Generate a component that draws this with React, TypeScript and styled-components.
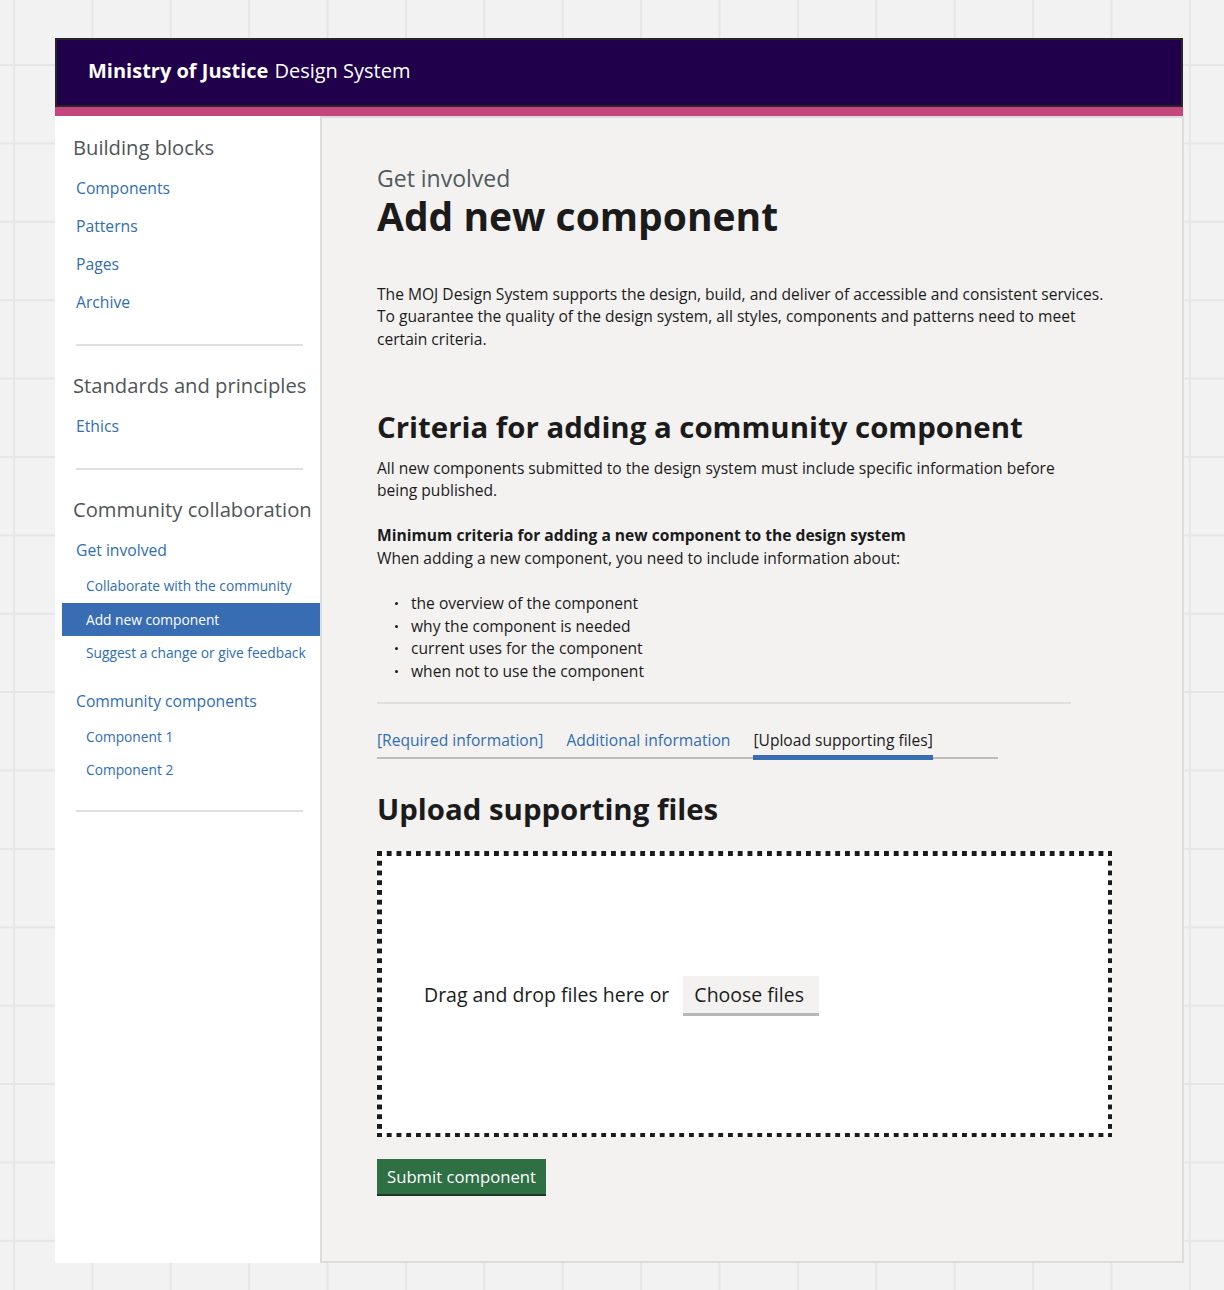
import React from "react";
import styled, { createGlobalStyle } from "styled-components";

const GlobalStyle = createGlobalStyle`
  html, body {
    margin: 0;
    padding: 0;
  }
  body {
    font-family: "Open Sans", "Noto Sans", Arial, sans-serif;
    background-color: #f2f2f2;
    background-image:
      linear-gradient(to right, #e6e6e6 2px, transparent 2px),
      linear-gradient(to bottom, #e6e6e6 2px, transparent 2px);
    background-size: 78.4px 78.4px;
    background-position: 13px 64px;
    min-height: 1290px;
  }
  * { box-sizing: border-box; }
`;

const Frame = styled.div`
  width: 1128px;
  margin: 38px 0 0 55px;
  padding-bottom: 27px;
`;

const Header = styled.header`
  height: 69px;
  background: #20004a;
  border: 2px solid #262626;
  display: flex;
  align-items: center;
  padding: 0 0 5px 31px;
  color: #ffffff;
  font-size: 20px;
`;

const Brand = styled.strong`
  font-weight: 700;
  margin-right: 6px;
`;

const Stripe = styled.div`
  height: 9px;
  background: #c4467c;
`;

const Body = styled.div`
  display: grid;
  grid-template-columns: 265px 1fr;
`;

const Sidebar = styled.nav`
  background: #ffffff;
  padding-top: 17px;
  display: flex;
  flex-direction: column;
`;

const SideHeading = styled.h2`
  margin: 0 0 8px 18px;
  font-size: 20.2px;
  line-height: 28px;
  font-weight: 400;
  color: #505558;
  white-space: nowrap;
`;

const SideList = styled.ul`
  list-style: none;
  margin: 0;
  padding: 0;
`;

const SideLink = styled.li<{ $gap?: number }>`
  height: 38px;
  line-height: 38px;
  padding-left: 21px;
  margin-top: ${(p) => p.$gap ?? 0}px;
  font-size: 15.7px;
  color: #2f6db5;
`;

const SubLink = styled.li<{ $active?: boolean }>`
  height: 33.5px;
  line-height: 33.5px;
  margin-left: 7px;
  padding-left: 24px;
  font-size: 13.75px;
  color: ${(p) => (p.$active ? "#ffffff" : "#2f6db5")};
  background: ${(p) => (p.$active ? "#386db4" : "transparent")};
  white-space: nowrap;
`;

const SideRule = styled.hr`
  border: 0;
  height: 2px;
  background: #e0e0e0;
  margin: 23px 17px 25px 21px;
`;

const Main = styled.main`
  background: #f3f2f1;
  border: 2px solid #dcdcdc;
  padding: 48px 70px 67px 55px;
  color: #0b0c0c;
`;

const Caption = styled.span`
  display: block;
  font-size: 23px;
  line-height: 24px;
  color: #505a5f;
`;

const Title = styled.h1`
  margin: 0;
  font-size: 39px;
  line-height: 52px;
  font-weight: 700;
  color: #1b1b1b;
`;

const Lead = styled.p<{ $top: number; $width?: number }>`
  margin: ${(p) => p.$top}px 0 0;
  font-size: 15.6px;
  line-height: 22.3px;
  color: #1b1b1b;
  max-width: ${(p) => p.$width ?? 740}px;
`;

const SectionTitle = styled.h2<{ $top: number }>`
  margin: ${(p) => p.$top}px 0 0;
  font-size: 29.4px;
  line-height: 40px;
  font-weight: 700;
  color: #1b1b1b;
`;

const Bold = styled.strong`
  font-weight: 700;
`;

const Bullets = styled.ul`
  list-style: none;
  margin: 23px 0 0;
  padding: 0 0 0 34px;
  font-size: 15.6px;
  line-height: 22.5px;
  color: #1b1b1b;
`;

const Bullet = styled.li`
  position: relative;
  &::before {
    content: "";
    position: absolute;
    left: -16px;
    top: 10px;
    width: 3px;
    height: 3px;
    border-radius: 50%;
    background: #1b1b1b;
  }
`;

const Rule = styled.hr`
  border: 0;
  height: 2px;
  background: #dedede;
  width: 694px;
  margin: 20px 0 25px;
`;

const TabList = styled.div`
  display: flex;
  gap: 23px;
  width: 621px;
  border-bottom: 2px solid #bcbcbc;
`;

const Tab = styled.span<{ $active?: boolean }>`
  font-size: 15.6px;
  line-height: 22px;
  padding-bottom: 4px;
  margin-bottom: -3px;
  border-bottom: 5px solid ${(p) => (p.$active ? "#386db4" : "transparent")};
  color: ${(p) => (p.$active ? "#1b1b1b" : "#2f6db5")};
  white-space: nowrap;
`;

const DropZone = styled.div`
  margin-top: 22px;
  width: 735px;
  height: 286px;
  display: flex;
  align-items: center;
  gap: 14px;
  padding: 0 0 0 47px;
  background:
    linear-gradient(to right, #1b1b1b 46%, transparent 46%) left top / 9.75px 4.5px repeat-x,
    linear-gradient(to right, #1b1b1b 46%, transparent 46%) left bottom / 9.75px 4.5px repeat-x,
    linear-gradient(to bottom, #1b1b1b 46%, transparent 46%) left top / 4.5px 9.75px repeat-y,
    linear-gradient(to bottom, #1b1b1b 46%, transparent 46%) right top / 4.5px 9.75px repeat-y,
    #ffffff;
`;

const DropText = styled.span`
  font-size: 19.5px;
  color: #1b1b1b;
`;

const ChooseButton = styled.button`
  font-family: inherit;
  font-size: 19.5px;
  line-height: 26px;
  color: #1b1b1b;
  background: #f3f2f1;
  border: 0;
  border-bottom: 3px solid #b6b8ba;
  padding: 6px 15px 5px 11px;
  margin-bottom: -3px;
  cursor: pointer;
`;

const SubmitButton = styled.button`
  margin-top: 22px;
  font-family: inherit;
  font-size: 16.7px;
  line-height: 24px;
  color: #ffffff;
  background: #2e6f44;
  border: 0;
  box-shadow: 0 2px 0 #183a23;
  padding: 6px 10px 5px;
  cursor: pointer;
`;

export default function App() {
  return (
    <>
      <GlobalStyle />
      <Frame>
        <Header>
          <Brand>Ministry of Justice</Brand> Design System
        </Header>
        <Stripe />
        <Body>
          <Sidebar>
            <SideHeading>Building blocks</SideHeading>
            <SideList>
              <SideLink>Components</SideLink>
              <SideLink>Patterns</SideLink>
              <SideLink>Pages</SideLink>
              <SideLink>Archive</SideLink>
            </SideList>
            <SideRule />
            <SideHeading>Standards and principles</SideHeading>
            <SideList>
              <SideLink>Ethics</SideLink>
            </SideList>
            <SideRule />
            <SideHeading>Community collaboration</SideHeading>
            <SideList>
              <SideLink>Get involved</SideLink>
              <SubLink>Collaborate with the community</SubLink>
              <SubLink $active>Add new component</SubLink>
              <SubLink>Suggest a change or give feedback</SubLink>
              <SideLink $gap={12}>Community components</SideLink>
              <SubLink>Component 1</SubLink>
              <SubLink>Component 2</SubLink>
            </SideList>
            <SideRule />
          </Sidebar>
          <Main>
            <Caption>Get involved</Caption>
            <Title>Add new component</Title>
            <Lead $top={41}>
              The MOJ Design System supports the design, build, and deliver of accessible and
              consistent services. To guarantee the quality of the design system, all styles,
              components and patterns need to meet certain criteria.
            </Lead>
            <SectionTitle $top={57}>Criteria for adding a community component</SectionTitle>
            <Lead $top={10} $width={700}>
              All new components submitted to the design system must include specific information
              before being published.
            </Lead>
            <Lead $top={23}>
              <Bold>Minimum criteria for adding a new component to the design system</Bold>
              <br />
              When adding a new component, you need to include information about:
            </Lead>
            <Bullets>
              <Bullet>the overview of the component</Bullet>
              <Bullet>why the component is needed</Bullet>
              <Bullet>current uses for the component</Bullet>
              <Bullet>when not to use the component</Bullet>
            </Bullets>
            <Rule />
            <TabList>
              <Tab>[Required information]</Tab>
              <Tab>Additional information</Tab>
              <Tab $active>[Upload supporting files]</Tab>
            </TabList>
            <SectionTitle $top={30}>Upload supporting files</SectionTitle>
            <DropZone>
              <DropText>Drag and drop files here or</DropText>
              <ChooseButton>Choose files</ChooseButton>
            </DropZone>
            <SubmitButton>Submit component</SubmitButton>
          </Main>
        </Body>
      </Frame>
    </>
  );
}
